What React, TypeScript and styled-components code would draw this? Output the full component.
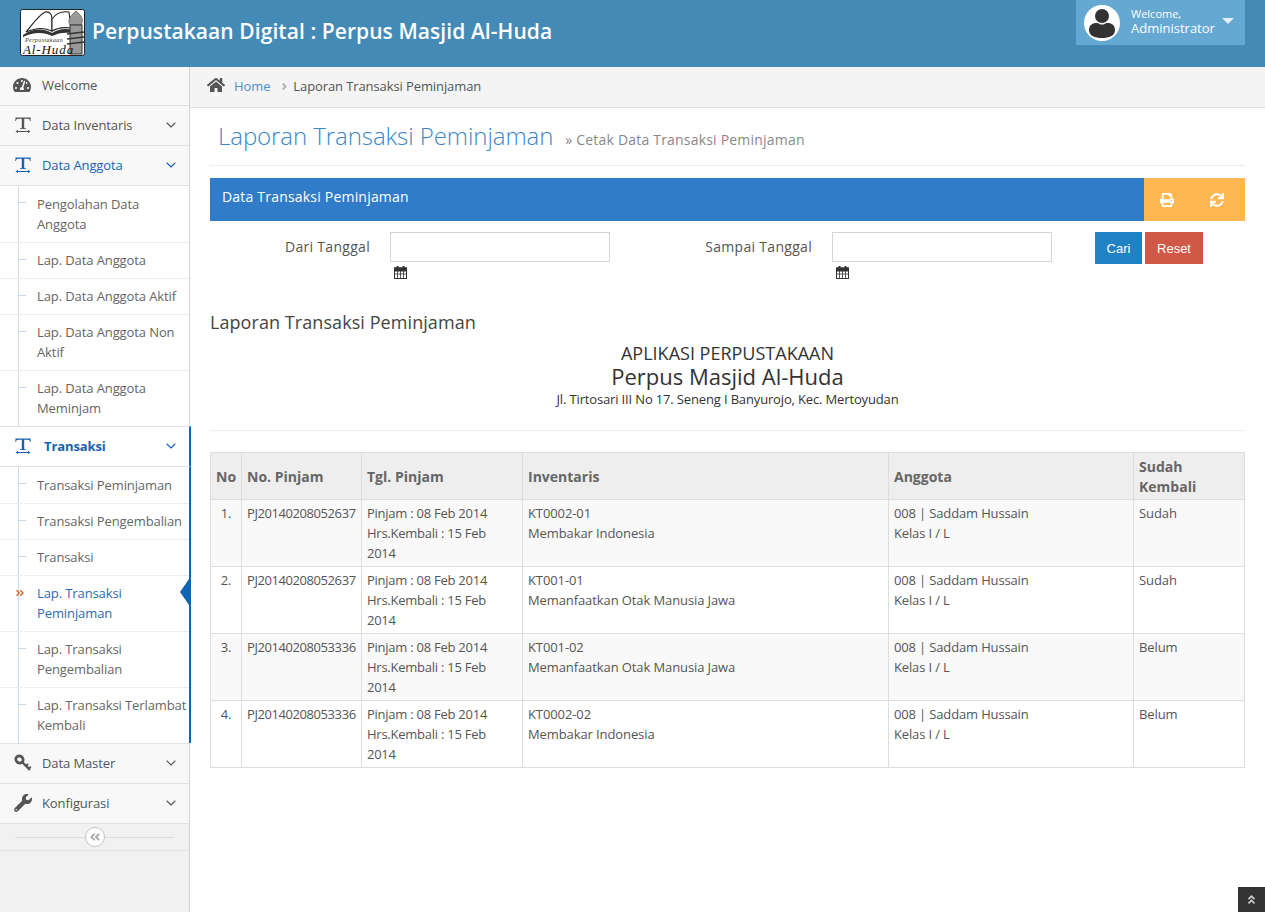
import React from "react";
import styled, { createGlobalStyle } from "styled-components";
import { FaTachometerAlt, FaWrench, FaHome, FaPrint, FaSync, FaAngleDoubleUp, FaAngleDoubleLeft, FaAngleDoubleRight, FaAngleRight } from "react-icons/fa";
import { FiChevronDown } from "react-icons/fi";

const Global = createGlobalStyle`
  html, body { margin: 0; padding: 0; height: 100%; overflow: hidden; background: #fff; }
  body { font-family: "Open Sans", "Liberation Sans", sans-serif; font-size: 13px; color: #555; letter-spacing: -0.1px; }
  * { box-sizing: border-box; }
`;

const Page = styled.div`display: flex; flex-direction: column; height: 912px;`;
const Header = styled.header`
  height: 67px; flex: none; background: #448ab6; display: flex; align-items: flex-start;
  justify-content: space-between; padding: 0 20px;
`;
const Brand = styled.div`display: flex; align-items: center; gap: 7px; height: 67px; padding-bottom: 2px;`;
const BrandTitle = styled.span`
  font-size: 21px; font-weight: 600; color: #fff; white-space: nowrap; letter-spacing: 0.07px; margin-top: -4px;
`;
const UserBox = styled.div`
  width: 169px; height: 45px; background: #65a8d2; display: flex; align-items: center;
  padding-left: 8px; color: #fff; position: relative; letter-spacing: 0;
`;
const UserText = styled.div`margin-left: 11px; display: flex; flex-direction: column;`;
const UserHello = styled.span`font-size: 11px; line-height: 14px; margin-top: -2px;`;
const UserName = styled.span`font-size: 13px; line-height: 15px;`;
const Caret = styled.span`
  position: absolute; right: 11px; top: 18px; width: 0; height: 0;
  border-left: 6px solid transparent; border-right: 6px solid transparent; border-top: 6px solid #e6f0f7;
`;

const Body = styled.div`flex: 1; display: flex; min-height: 0;`;
const Sidebar = styled.aside`
  width: 190px; flex: none; background: #f1f1f1; border-right: 1px solid #d4d4d4;
  display: flex; flex-direction: column;
`;
const MenuItem = styled.div<{ $open?: boolean; $active?: boolean; $h?: number; $top?: boolean }>`
  height: ${p => p.$h ?? 40}px; flex: none; display: flex; align-items: center; padding-bottom: 2px;
  background: ${p => (p.$active ? "#fff" : "#f8f8f8")};
  border-bottom: 1px solid #e2e2e2;
  border-top: ${p => (p.$top ? "1px solid #e2e2e2" : "none")};
  color: ${p => (p.$open || p.$active ? "#1763b0" : "#555")};
  font-weight: ${p => (p.$active ? 700 : 400)};
  margin-right: ${p => (p.$active ? "-2px" : "0")};
  border-right: ${p => (p.$active ? "2px solid #0c66b8" : "none")};
  padding-right: 10px;
`;
const IconSlot = styled.span<{ $active?: boolean; $pad?: number }>`
  width: 42px; padding-left: ${p => p.$pad ?? 13}px; flex: none; font-size: 18px; display: flex; align-items: center;
  color: ${p => (p.$active ? "#1763b0" : "inherit")};
  svg { display: block; flex: none; }
`;
const MenuLabel = styled.span<{ $shift?: boolean }>`flex: 1; white-space: nowrap; margin-left: ${p => (p.$shift ? "2px" : "0")};`;
const Chevron = styled(FiChevronDown)`font-size: 16px; color: inherit; stroke-width: 1.6;`;

const SubMenu = styled.div<{ $active?: boolean }>`
  background: #fff; position: relative; flex: none;
  margin-right: ${p => (p.$active ? "-2px" : "0")};
  border-right: ${p => (p.$active ? "2px solid #0c66b8" : "none")};
  &::before {
    content: ""; position: absolute; left: 18px; top: 0; bottom: 0; width: 1px;
    background: ${p => (p.$active ? "#c6d8ea" : "#dcdcdc")};
  }
`;
const SubItem = styled.div<{ $current?: boolean }>`
  position: relative; padding: 7px 0 8px 37px; line-height: 20px; border-top: 1px dotted #ddd;
  color: ${p => (p.$current ? "#2a6bb3" : "#666")};
  &:first-child { border-top: none; padding-top: 8px; }
  &::before {
    content: ""; position: absolute; left: 18px; top: 16px; width: 8px; height: 1px;
    background: ${p => (p.$current ? "transparent" : "#c6d8ea")};
  }
`;
const CurrentMark = styled.span`
  position: absolute; left: 15px; top: 12px; font-size: 10px; line-height: 1; color: #d9713f;
`;
const CurrentArrow = styled.span`
  position: absolute; right: 0; top: 3px; width: 0; height: 0;
  border-top: 13px solid transparent; border-bottom: 13px solid transparent; border-right: 9px solid #0c66b8;
`;
const Toggler = styled.div`
  height: 27px; flex: none; background: #f1f1f1; border-bottom: 1px solid #e2e2e2; position: relative;
  display: flex; align-items: center; justify-content: center;
  &::before { content: ""; position: absolute; left: 15px; right: 15px; top: 13px; height: 1px; background: #dcdcdc; }
`;
const TogglerBtn = styled.span`
  position: relative; width: 20px; height: 20px; border-radius: 50%; background: #fff; border: 1px solid #c4c4c4;
  color: #aaa; display: flex; align-items: center; justify-content: center; font-size: 12px; margin-top: -1px;
`;

const Main = styled.main`flex: 1; min-width: 0; display: flex; flex-direction: column;`;
const Crumbs = styled.nav`
  height: 41px; flex: none; background: #f4f4f4; border-bottom: 1px solid #e2e2e2; display: flex; align-items: center;
  padding: 0 0 2px 17px; color: #555;
`;
const CrumbHome = styled(FaHome)`font-size: 18px; color: #555; margin-right: 9px; margin-top: -2px;`;
const CrumbLink = styled.span`color: #4f8fc8;`;
const CrumbSep = styled(FaAngleRight)`font-size: 11px; color: #aaa; margin: 1px 3px 0 9px;`;
const Content = styled.div`padding: 0 20px; flex: 1; position: relative;`;
const TitleRow = styled.div`
  height: 58px; border-bottom: 1px dotted #ddd; display: flex; align-items: baseline; padding: 11px 0 0 8px;
`;
const PageTitle = styled.h1`margin: 0; font-size: 24px; line-height: 33px; font-weight: 300; color: #3b87c8; letter-spacing: -0.07px;`;
const PageSub = styled.small`font-size: 14px; color: #888; margin-left: 12px; letter-spacing: 0.2px;`;
const Panel = styled.div`
  margin-top: 12px; height: 43px; background: #317cc9; display: flex; align-items: stretch; justify-content: space-between;
  color: #fff;
`;
const PanelTitle = styled.div`font-size: 14px; padding: 9px 0 0 12px; letter-spacing: 0.2px;`;
const PanelTools = styled.div`
  width: 101px; background: #ffb751; display: flex; align-items: center; padding: 0 0 0 16px; gap: 36px; font-size: 14px;
`;
const Filter = styled.div`display: flex; margin-top: 11px; height: 70px; align-items: flex-start;`;
const FieldLabel = styled.label<{ $w: number }>`
  width: ${p => p.$w}px; text-align: right; font-size: 14px; line-height: 30px; margin-right: 20px; color: #555; flex: none;
  letter-spacing: 0.3px;
`;
const Field = styled.div`width: 220px; flex: none;`;
const DateInput = styled.input`
  display: block; width: 220px; height: 30px; border: 1px solid #d4d4d4; background: #fff; outline: none; padding: 0 8px;
`;
const CalSvg = styled.svg`display: block; margin: 4px 0 0 4px;`;
const Actions = styled.div`display: flex; gap: 3px; margin-left: 43px;`;
const Btn = styled.button<{ $bg: string; $w: number }>`
  width: ${p => p.$w}px; height: 32px; border: none; padding: 0; background: ${p => p.$bg}; color: #fff;
  font-family: "Liberation Sans", Arial, sans-serif; font-size: 13px; letter-spacing: 0;
`;
const ReportHead = styled.h3`margin: 0; padding-top: 8px; font-size: 18px; line-height: 24px; font-weight: 400; color: #444; letter-spacing: 0.07px;`;
const Center = styled.div`text-align: center; border-bottom: 1px solid #eee; height: 97px; padding-top: 7px; color: #333;`;
const OrgTop = styled.div`font-size: 18px; line-height: 24px; height: 23px; letter-spacing: 0;`;
const OrgName = styled.div`font-size: 22px; line-height: 24px; letter-spacing: 0;`;
const OrgAddr = styled.div`font-size: 13px; line-height: 20px; margin-top: 1px; letter-spacing: -0.15px;`;

const Table = styled.table`
  margin-top: 21px; width: 1035px; border-collapse: collapse; table-layout: fixed; color: #555;
  th, td { border: 1px solid #ddd; vertical-align: top; line-height: 20px; }
`;
const Th = styled.th`
  background: #eee; text-align: left; font-weight: 700; padding: 4px 5px 2px 5px; color: #666; font-size: 14px; height: 47px;
  letter-spacing: 0;
  && { vertical-align: middle; }
`;
const Row = styled.tr<{ $odd: boolean }>`background: ${p => (p.$odd ? "#f9f9f9" : "#fff")};`;
const Td = styled.td<{ $center?: boolean; $tight?: number }>`
  padding: 3px 5px 3px 5px; height: 67px; text-align: ${p => (p.$center ? "center" : "left")};
  letter-spacing: ${p => p.$tight ?? -0.1}px;
`;
const ScrollTop = styled.div`
  position: fixed; right: 0; bottom: 0; width: 27px; height: 25px; background: #333; color: #ccc;
  display: flex; align-items: center; justify-content: center; font-size: 11px;
`;

const Logo = () => (
  <svg width="65" height="47" viewBox="0 0 65 47">
    <rect x="0.5" y="0.5" width="64" height="46" rx="2" fill="#fff" stroke="#222" />
    <path d="M6 23 C12 16 18 7 25 3 C31 2 32 7 32 10 L32 22 C24 18 15 19 6 23 Z" fill="#fff" stroke="#222" strokeWidth="1.1" />
    <path d="M32 10 C36 4 42 2 49 3 L51 19 C44 18 37 19 32 22 Z" fill="#fff" stroke="#222" strokeWidth="1.1" />
    <path d="M3 26 C13 19 24 19 32 24 C38 20 46 19 52 21 L52 24 C44 23 38 24 32 27 C24 23 13 23 3 28 Z" fill="#333" />
    <path d="M50 16 C47 11 50 7 56 2 C62 7 64 11 61 16 Z" fill="#999" stroke="#444" strokeWidth="0.6" />
    <rect x="50" y="16" width="12" height="29" fill="#999" stroke="#333" />
    <path d="M47 25 L64 23 M47 30 L64 28 M47 35 L64 33" stroke="#333" strokeWidth="1.4" />
    <text x="5" y="33" fontFamily="'Liberation Serif', serif" fontStyle="italic" fontSize="6" fill="#333" letterSpacing="0.4">Perpustakaan</text>
    <text x="3" y="45" fontFamily="'Liberation Serif', serif" fontStyle="italic" fontSize="13" fill="#111" letterSpacing="0.9">Al-Huda</text>
  </svg>
);

const Avatar = () => (
  <svg width="36" height="36" viewBox="0 0 36 36">
    <circle cx="18" cy="18" r="18" fill="#fff" />
    <circle cx="18" cy="11" r="7" fill="#333" />
    <path d="M5 25 C5 18 11 18 14 18 C16 20 20 20 22 18 C25 18 31 18 31 25 C31 31 25 33 18 33 C11 33 5 31 5 25 Z" fill="#333" />
  </svg>
);

const TextWidthIcon = () => (
  <svg width="16" height="16" viewBox="0 0 16 16" fill="currentColor">
    <path d="M0.5 0.5 H15.5 L15.7 4 H15 C14.8 2.6 14.2 1.8 12.5 1.8 H9.2 V10.4 C9.2 11 9.6 11.2 11 11.3 V12 H5 V11.3 C6.4 11.2 6.8 11 6.8 10.4 V1.8 H3.5 C1.8 1.8 1.2 2.6 1 4 H0.3 Z" />
    <path d="M0.5 14.5 L3 12.8 V14 H13 V12.8 L15.5 14.5 L13 16 V15 H3 V16 Z" />
  </svg>
);

const KeyIcon = () => (
  <svg width="18" height="18" viewBox="0 0 18 18" fill="none" stroke="currentColor">
    <ellipse cx="5.5" cy="5.5" rx="3.8" ry="3.4" strokeWidth="2.8" transform="rotate(40 5.5 5.5)" />
    <path d="M8.5 8.5 L16 15.8" strokeWidth="2.4" />
    <path d="M12 12 L14.2 9.8 M14.8 14.6 L16.8 12.6" strokeWidth="1.8" />
  </svg>
);

const CalendarIcon = () => (
  <CalSvg width="13" height="13" viewBox="0 0 13 13" fill="none" stroke="#333">
    <rect x="0.5" y="2" width="12" height="10.5" />
    <rect x="0.5" y="2" width="12" height="3" fill="#333" />
    <path d="M3.5 0 V3 M9.5 0 V3" strokeWidth="2" />
    <path d="M0.5 8 H12.5 M3.5 5 V12 M6.5 5 V12 M9.5 5 V12" strokeWidth="0.8" />
  </CalSvg>
);

const anggota = ["Pengolahan Data Anggota", "Lap. Data Anggota", "Lap. Data Anggota Aktif", "Lap. Data Anggota Non Aktif", "Lap. Data Anggota Meminjam"];
const transaksi = ["Transaksi Peminjaman", "Transaksi Pengembalian", "Transaksi", "Lap. Transaksi Peminjaman", "Lap. Transaksi Pengembalian", "Lap. Transaksi Terlambat Kembali"];
const widths = [31, 120, 161, 366, 245, 111];
const rows = [
  ["1.", "PJ20140208052637", "KT0002-01", "Membakar Indonesia", "Sudah"],
  ["2.", "PJ20140208052637", "KT001-01", "Memanfaatkan Otak Manusia Jawa", "Sudah"],
  ["3.", "PJ20140208053336", "KT001-02", "Memanfaatkan Otak Manusia Jawa", "Belum"],
  ["4.", "PJ20140208053336", "KT0002-02", "Membakar Indonesia", "Belum"],
];

export default function App() {
  return (
    <Page>
      <Global />
      <Header>
        <Brand>
          <Logo />
          <BrandTitle>Perpustakaan Digital : Perpus Masjid Al-Huda</BrandTitle>
        </Brand>
        <UserBox>
          <Avatar />
          <UserText>
            <UserHello>Welcome,</UserHello>
            <UserName>Administrator</UserName>
          </UserText>
          <Caret />
        </UserBox>
      </Header>
      <Body>
        <Sidebar>
          <MenuItem $h={39}><IconSlot><FaTachometerAlt /></IconSlot><MenuLabel>Welcome</MenuLabel></MenuItem>
          <MenuItem><IconSlot $pad={15}><TextWidthIcon /></IconSlot><MenuLabel>Data Inventaris</MenuLabel><Chevron /></MenuItem>
          <MenuItem $open><IconSlot $active $pad={15}><TextWidthIcon /></IconSlot><MenuLabel>Data Anggota</MenuLabel><Chevron /></MenuItem>
          <SubMenu>
            {anggota.map(t => <SubItem key={t}>{t}</SubItem>)}
          </SubMenu>
          <MenuItem $active $top $h={41}><IconSlot $active $pad={15}><TextWidthIcon /></IconSlot><MenuLabel $shift>Transaksi</MenuLabel><Chevron /></MenuItem>
          <SubMenu $active>
            {transaksi.map((t, i) => (
              <SubItem key={t} $current={i === 3}>
                {i === 3 && <CurrentMark><FaAngleDoubleRight /></CurrentMark>}
                {t}
                {i === 3 && <CurrentArrow />}
              </SubItem>
            ))}
          </SubMenu>
          <MenuItem $top $h={41}><IconSlot $pad={14}><KeyIcon /></IconSlot><MenuLabel>Data Master</MenuLabel><Chevron /></MenuItem>
          <MenuItem><IconSlot $pad={14}><FaWrench /></IconSlot><MenuLabel>Konfigurasi</MenuLabel><Chevron /></MenuItem>
          <Toggler><TogglerBtn><FaAngleDoubleLeft /></TogglerBtn></Toggler>
        </Sidebar>
        <Main>
          <Crumbs>
            <CrumbHome />
            <CrumbLink>Home</CrumbLink>
            <CrumbSep />
            <span>Laporan Transaksi Peminjaman</span>
          </Crumbs>
          <Content>
            <TitleRow>
              <PageTitle>Laporan Transaksi Peminjaman</PageTitle>
              <PageSub>» Cetak Data Transaksi Peminjaman</PageSub>
            </TitleRow>
            <Panel>
              <PanelTitle>Data Transaksi Peminjaman</PanelTitle>
              <PanelTools><FaPrint /><FaSync /></PanelTools>
            </Panel>
            <Filter>
              <FieldLabel $w={160}>Dari Tanggal</FieldLabel>
              <Field><DateInput /><CalendarIcon /></Field>
              <FieldLabel $w={202}>Sampai Tanggal</FieldLabel>
              <Field><DateInput /><CalendarIcon /></Field>
              <Actions>
                <Btn $bg="#2081c4" $w={47}>Cari</Btn>
                <Btn $bg="#d15847" $w={58}>Reset</Btn>
              </Actions>
            </Filter>
            <ReportHead>Laporan Transaksi Peminjaman</ReportHead>
            <Center>
              <OrgTop>APLIKASI PERPUSTAKAAN</OrgTop>
              <OrgName>Perpus Masjid Al-Huda</OrgName>
              <OrgAddr>Jl. Tirtosari III No 17. Seneng I Banyurojo, Kec. Mertoyudan</OrgAddr>
            </Center>
            <Table>
              <colgroup>
                {widths.map((w, i) => <col key={i} width={w} />)}
              </colgroup>
              <thead>
                <tr>
                  <Th>No</Th><Th>No. Pinjam</Th><Th>Tgl. Pinjam</Th><Th>Inventaris</Th><Th>Anggota</Th><Th>Sudah Kembali</Th>
                </tr>
              </thead>
              <tbody>
                {rows.map((r, i) => (
                  <Row key={i} $odd={i % 2 === 0}>
                    <Td $center>{r[0]}</Td>
                    <Td $tight={-0.42}>{r[1]}</Td>
                    <Td $tight={-0.25}>Pinjam : 08 Feb 2014<br />Hrs.Kembali : 15 Feb 2014</Td>
                    <Td>{r[2]}<br />{r[3]}</Td>
                    <Td $tight={-0.15}>008 | Saddam Hussain<br />Kelas I / L</Td>
                    <Td>{r[4]}</Td>
                  </Row>
                ))}
              </tbody>
            </Table>
          </Content>
        </Main>
      </Body>
      <ScrollTop><FaAngleDoubleUp /></ScrollTop>
    </Page>
  );
}
